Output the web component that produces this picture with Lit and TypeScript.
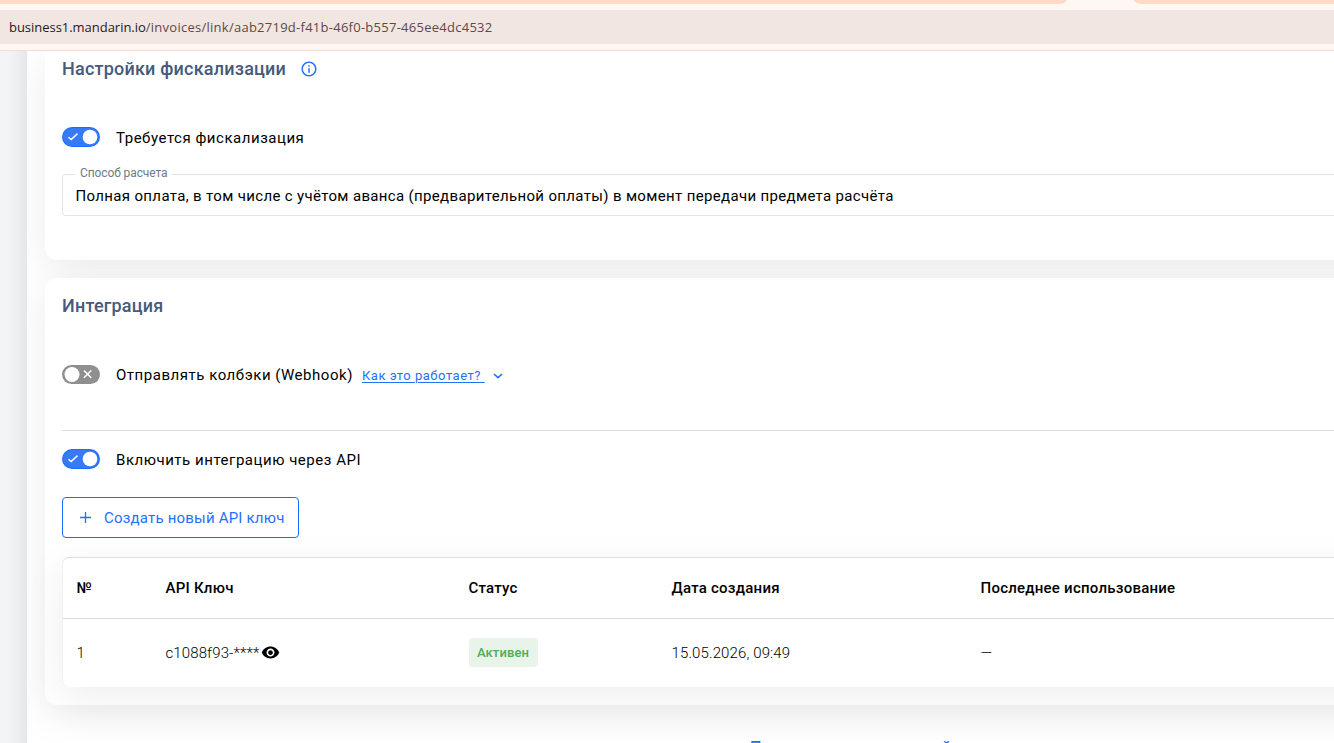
import { LitElement, html, css } from "lit";
import { customElement, property } from "lit/decorators.js";

@customElement("mini-switch")
class MiniSwitch extends LitElement {
  @property({ type: Boolean }) on = false;
  static styles = css`
    :host { display: block; width: 38px; height: 20px; flex: none; }
    svg { display: block; }
  `;
  render() {
    return this.on
      ? html`<svg width="38" height="20" viewBox="0 0 38 20">
          <rect width="38" height="20" rx="10" fill="#1a6cff" />
          <rect x="1" y="1" width="36" height="18" rx="9" fill="#367af6" />
          <path d="M6.5 10.2l2.7 2.4 6.3-6" fill="none" stroke="#fff" stroke-width="1.5" />
          <circle cx="28" cy="10" r="7.3" fill="#fff" />
        </svg>`
      : html`<svg width="38" height="20" viewBox="0 0 38 20">
          <rect y="1" width="38" height="19" rx="9.5" fill="#8f8f8f" />
          <path d="M22 6.500l7.200 7.200M29.200 6.500L22 13.700" fill="none" stroke="#fff" stroke-width="1.6" />
          <circle cx="10" cy="10.500" r="7.5" fill="#fff" />
        </svg>`;
  }
}

@customElement("app-root")
class AppRoot extends LitElement {
  static styles = css`
    :host {
      display: flex; flex-direction: column; width: 1334px; height: 743px; overflow: hidden;
      background: #fff; color: #000; font: 400 15px/20px Roboto, sans-serif; letter-spacing: 0.53px;
    }
    * { box-sizing: border-box; }
    svg { display: block; flex: none; }
    .tabs { height: 4px; flex: none; display: flex; justify-content: space-between; background: #fff7f3; }
    .tab-left { width: 1067px; background: #ffdac6; border-bottom-right-radius: 9px 4px; }
    .tab-right { width: 200px; background: #ffdac6; border-bottom-left-radius: 9px 4px; }
    .toolbar { height: 47px; flex: none; padding: 6px 0; background: #fff7f3; border-bottom: 1px solid #f6ddd0; }
    .address {
      height: 34px; padding-left: 9px; background: #f2e6e3; color: #5b4a45; line-height: 34px;
      font-family: "Open Sans", "Noto Sans", sans-serif; font-size: 13px; letter-spacing: 0.165px; white-space: pre;
    }
    .url { display: inline-block; }
    .host { color: #1f1a19; letter-spacing: -0.03px; }
    .path { letter-spacing: 0.26px; }
    .page { flex: 1; min-height: 0; display: flex; overflow: hidden; }
    .rail { width: 27px; flex: none; background: linear-gradient(90deg, #f3f4f7 0, #f2f3f5 10px, #ebecee 20px, #e5e6e8 27px); }
    .content { flex: 1; min-width: 0; padding-left: 18px; overflow: hidden; }
    .card {
      position: relative; width: 1400px; padding-left: 17px; background: #fff; border-radius: 12px;
      box-shadow: 0 10px 40px rgba(0, 0, 0, 0.08);
    }
    .fiscal { height: 209px; border-radius: 0 0 12px 12px; padding-top: 7px; }
    .integration { height: 427px; margin-top: 18px; padding-top: 17px; }
    .title { display: flex; align-items: center; height: 21px; color: #465a7b; font-size: 18px; font-weight: 500; letter-spacing: 0.21px; }
    .title svg { margin-left: 14px; }
    .row { display: flex; align-items: center; height: 20px; }
    .label { margin-left: 16px; white-space: pre; position: relative; top: 1px; }
    .fiscal .row { margin-top: 48px; }
    .field {
      margin: 18px 0 0; padding: 0 0 0 12px; height: 51px; width: 1380px; border: 1px solid #e0e7ea; border-top-color: #d9e4ea;
      border-radius: 4px; min-width: 0; font-size: 15px;
    }
    .field legend { height: 18px; padding: 0 4px 0 5px; color: #6b7c8b; font-size: 12px; line-height: 16px; letter-spacing: -0.1px; }
    .value { padding-left: 0.5px; margin-top: 3px; line-height: 20px; letter-spacing: 0.343px; white-space: nowrap; }
    .hook { margin-top: 48px; }
    .help { display: flex; align-items: center; margin-left: 9px; color: #2472fb; font-size: 13px; position: relative; top: 2px; }
    .help-text { text-decoration: underline; text-underline-offset: 2px; white-space: pre; }
    .help svg { margin-left: 8px; }
    .divider { height: 1px; margin-top: 46px; background: #dedede; }
    .api { margin-top: 18px; }
    .create {
      display: flex; align-items: center; width: 237px; height: 41px; margin-top: 28px; padding: 0 0 0 17px;
      border: 1px solid #1a6bff; border-radius: 4px; background: #fff; color: #1f70ff; font: inherit; letter-spacing: 0.2px;
    }
    .create-text { margin-left: 13px; white-space: nowrap; }
    .keys {
      width: 1400px; height: 130px; margin-top: 19px; background: #fff; border: 1px solid #f0f0f0; border-top-color: #dedede; border-bottom: 0;
      border-radius: 7px; box-shadow: 0 10px 40px rgba(0, 0, 0, 0.07);
    }
    .line { display: grid; grid-template-columns: 89px 303px 203px 309px 1fr; align-items: center; padding-left: 13.5px; }
    .head { height: 61px; border-bottom: 1px solid #dedede; font-weight: 500; letter-spacing: 0.24px; }
    .item { height: 67px; font-weight: 300; letter-spacing: 0.12px; }
    .key { display: flex; align-items: center; }
    .key svg { margin-left: 2px; }
    .badge {
      justify-self: start; width: 69px; height: 29px; border-radius: 4px; background: #e8f4ea; color: #4caf50;
      font-size: 13px; font-weight: 500; line-height: 29px; text-align: center; letter-spacing: 0.1px;
    }
    .more { display: flex; margin: 33px 0 0 705px; color: #1f70ff; font-size: 16px; line-height: 20px; font-weight: 500; letter-spacing: 0.65px; white-space: nowrap; }
  `;

  render() {
    return html`
      <div class="tabs"><div class="tab-left"></div><div class="tab-right"></div></div>
      <div class="toolbar"><div class="address"><span class="url"><span class="host">business1.mandarin.io</span><span class="path">/invoices/link/aab2719d-f41b-46f0-b557-465ee4dc4532</span></span></div></div>
      <div class="page">
        <div class="rail"></div>
        <div class="content">
          <section class="card fiscal">
            <div class="title"><span>Настройки фискализации</span>
              <svg width="18" height="18" viewBox="0 0 24 24" fill="#2573fb"><path d="M11 7h2v2h-2zm0 4h2v6h-2zm1-9C6.48 2 2 6.48 2 12s4.480 10 10 10 10-4.480 10-10S17.520 2 12 2zm0 18c-4.410 0-8-3.590-8-8s3.590-8 8-8 8 3.590 8 8-3.590 8-8 8z" /></svg>
            </div>
            <div class="row"><mini-switch on></mini-switch><span class="label">Требуется фискализация</span></div>
            <fieldset class="field"><legend>Способ расчета</legend>
              <div class="value">Полная оплата, в том числе с учётом аванса (предварительной оплаты) в момент передачи предмета расчёта</div>
            </fieldset>
          </section>
          <section class="card integration">
            <div class="title">Интеграция</div>
            <div class="row hook"><mini-switch></mini-switch><span class="label">Отправлять колбэки (Webhook)</span>
              <a class="help"><span class="help-text">Как это работает? </span>
                <svg width="10" height="8" viewBox="0 0 10 8"><path d="M1 2l4 3.700L9 2" fill="none" stroke="#2472fb" stroke-width="1.600" /></svg>
              </a>
            </div>
            <div class="divider"></div>
            <div class="row api"><mini-switch on></mini-switch><span class="label">Включить интеграцию через API</span></div>
            <button class="create">
              <svg width="11" height="11" viewBox="0 0 11 11"><path d="M5.500 0v11M0 5.500h11" stroke="#1f70ff" stroke-width="1.300" /></svg>
              <span class="create-text">Создать новый API ключ</span>
            </button>
            <div class="keys">
              <div class="line head"><span>№</span><span>API Ключ</span><span>Статус</span><span>Дата создания</span><span>Последнее использование</span></div>
              <div class="line item"><span>1</span>
                <span class="key">c1088f93-****<svg width="19" height="19" viewBox="0 0 24 24"><path d="M12 4.500C7 4.500 2.730 7.610 1 12c1.730 4.390 6 7.500 11 7.500s9.270-3.110 11-7.500c-1.730-4.390-6-7.500-11-7.500zM12 17c-2.760 0-5-2.240-5-5s2.240-5 5-5 5 2.240 5 5-2.240 5-5 5zm0-8c-1.660 0-3 1.340-3 3s1.340 3 3 3 3-1.340 3-3-1.340-3-3-3z" /></svg></span>
                <span class="badge">Активен</span><span>15.05.2026, 09:49</span><span>—</span></div>
            </div>
          </section>
          <a class="more">Посмотреть все настройки</a>
        </div>
      </div>
    `;
  }
}
